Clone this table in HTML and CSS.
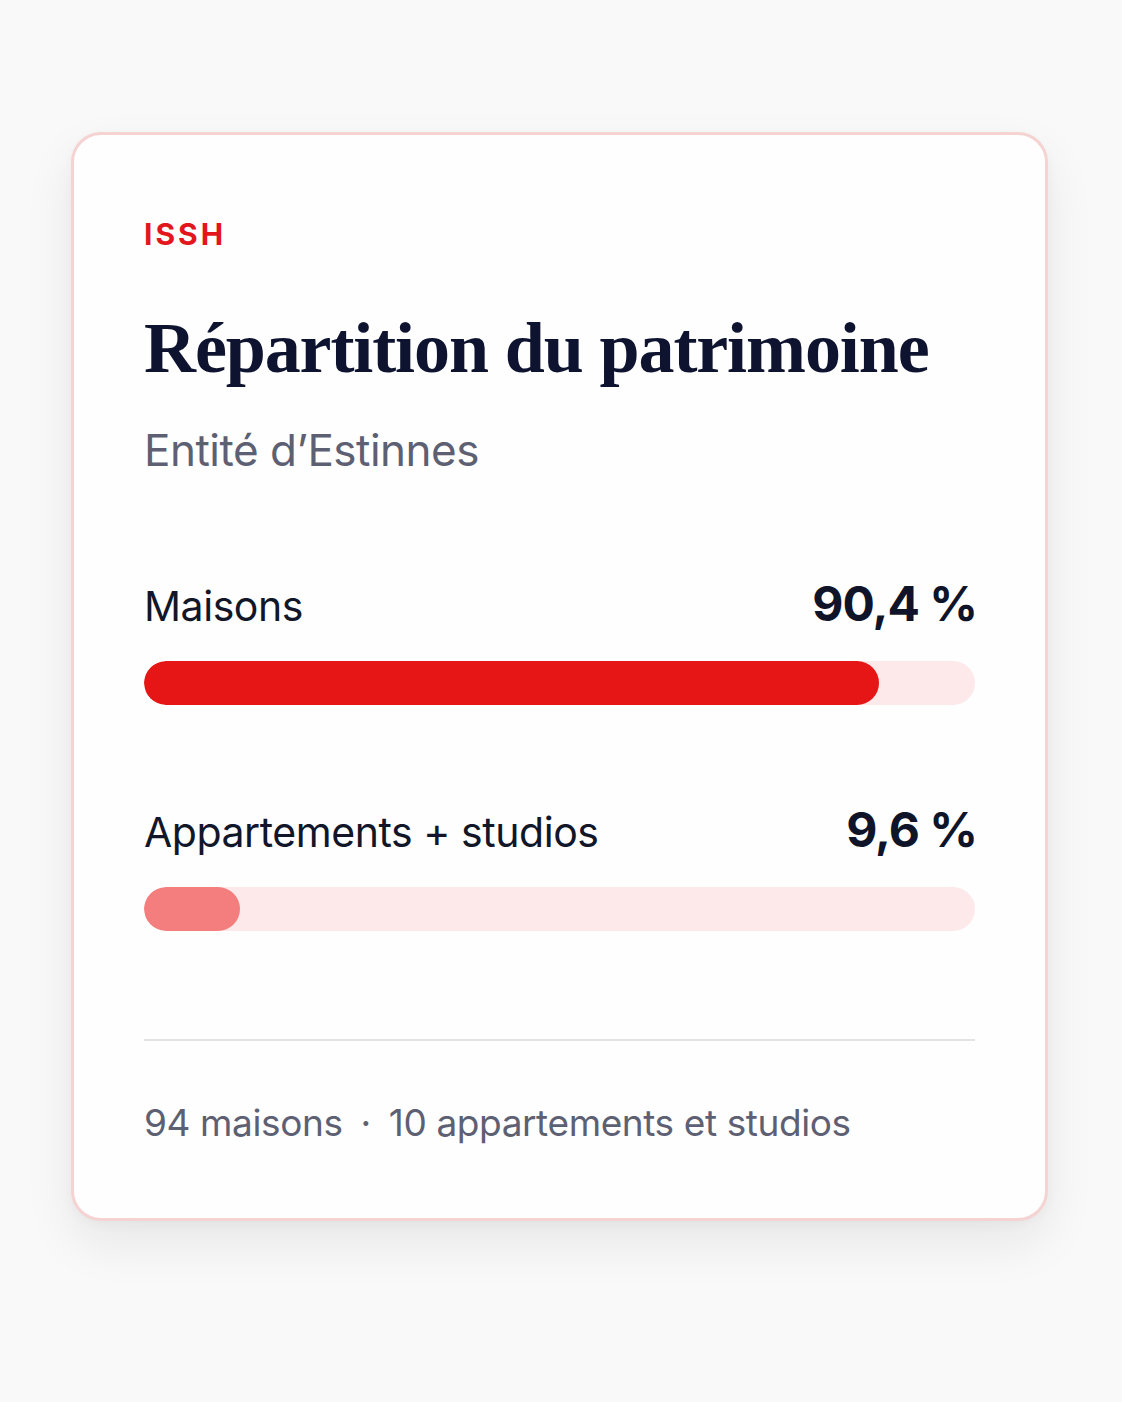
FILE: index.html
```html
<!DOCTYPE html>
<html lang="fr">
<head>
<meta charset="utf-8">
<title>Répartition du patrimoine</title>
<link rel="stylesheet" href="styles.css">
</head>
<body>
<main class="page">
  <section class="card">
    <div class="eyebrow">ISSH</div>
    <h1 class="title">Répartition du patrimoine</h1>
    <p class="subtitle">Entité d’Estinnes</p>

    <div class="stat stat-first">
      <div class="stat-head">
        <span class="stat-label">Maisons</span>
        <span class="stat-value">90,4 %</span>
      </div>
      <div class="track"><div class="fill fill-strong" style="width: 88.4%"></div></div>
    </div>

    <div class="stat">
      <div class="stat-head">
        <span class="stat-label">Appartements + studios</span>
        <span class="stat-value">9,6 %</span>
      </div>
      <div class="track"><div class="fill fill-soft" style="width: 11.5%"></div></div>
    </div>

    <hr class="divider">

    <p class="footer">94 maisons<span class="dot">·</span>10 appartements et studios</p>
  </section>
</main>
</body>
</html>
```
FILE: styles.css
```css
* { box-sizing: border-box; }

html, body {
  margin: 0;
  padding: 0;
  background: #f9f9f9;
}

body {
  font-family: "Inter", "Noto Sans", sans-serif;
  color: #111629;
}

.page {
  min-height: 100vh;
  padding: 132px 0 120px 71px;
  display: flex;
  align-items: flex-start;
}

.card {
  width: 977px;
  background: #fefefe;
  border: 3px solid #f6d3d3;
  border-radius: 30px;
  padding: 84px 70px 76px 70px;
  box-shadow: 0 22px 50px rgba(20, 20, 40, 0.08), 0 4px 12px rgba(20, 20, 40, 0.03);
}

.eyebrow {
  font-size: 30px;
  line-height: 30px;
  font-weight: 700;
  letter-spacing: 3px;
  color: #e3161b;
}

.title {
  margin: 64px 0 0 0;
  font-family: "Liberation Serif", "DejaVu Serif", serif;
  font-weight: 700;
  font-size: 72px;
  line-height: 70px;
  letter-spacing: -1.1px;
  color: #0e1430;
}

.subtitle {
  margin: 46px 0 0 0;
  font-size: 44px;
  line-height: 42px;
  color: #5d6072;
  letter-spacing: -0.5px;
}

.stat { margin-top: 101px; }
.stat-first { margin-top: 109px; }

.stat-head {
  display: flex;
  justify-content: space-between;
  align-items: baseline;
  line-height: 48px;
  height: 48px;
}

.stat-label {
  font-size: 41px;
  color: #111629;
  letter-spacing: -0.45px;
}

.stat-value {
  font-size: 48px;
  font-weight: 700;
  color: #0f1428;
  letter-spacing: -1px;
  margin-right: -2px;
}

.track {
  margin-top: 33px;
  height: 44px;
  border-radius: 22px;
  background: #fde9e9;
  overflow: hidden;
}

.fill {
  height: 100%;
  border-radius: 22px;
}

.fill-strong { background: #e61516; }
.fill-soft { background: #f47e7e; }

.divider {
  margin: 108px 0 0 0;
  border: 0;
  height: 2px;
  background: #e4e4e6;
}

.footer {
  margin: 63px 0 0 0;
  font-size: 37px;
  line-height: 38px;
  color: #5d6072;
  letter-spacing: -0.4px;
}

.dot {
  display: inline-block;
  margin: 0 18px;
}
```
